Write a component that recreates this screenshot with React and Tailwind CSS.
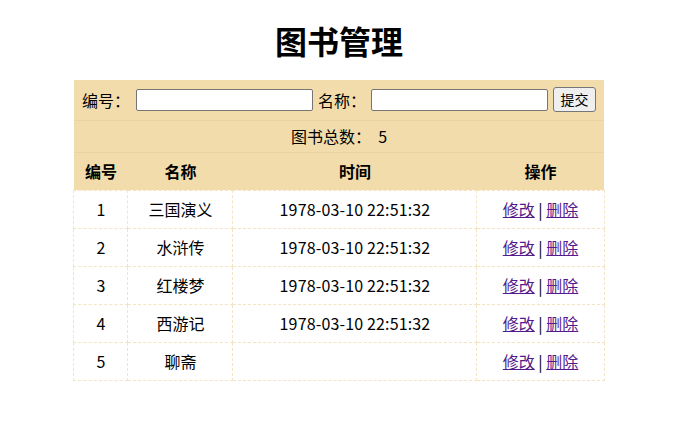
import React from 'react';

const books = [
  { id: 1, name: '三国演义', time: '1978-03-10 22:51:32' },
  { id: 2, name: '水浒传', time: '1978-03-10 22:51:32' },
  { id: 3, name: '红楼梦', time: '1978-03-10 22:51:32' },
  { id: 4, name: '西游记', time: '1978-03-10 22:51:32' },
  { id: 5, name: '聊斋', time: '' },
];

function App() {
  const font = { fontFamily: '"Noto Sans CJK SC", "Microsoft YaHei", sans-serif' };

  return (
    <div className="w-[678px] bg-white text-black text-[16px]" style={font}>
      <div className="h-[80px] flex items-center justify-center">
        <h1 className="text-[32px] font-bold leading-none">图书管理</h1>
      </div>

      <table className="mx-auto w-[530px] table-fixed border-collapse">
        <colgroup>
          <col className="w-[54px]" />
          <col className="w-[105px]" />
          <col className="w-[244px]" />
          <col className="w-[127px]" />
        </colgroup>
        <thead className="bg-[#f3dcab]">
          <tr className="h-[40px] border-b border-[#e8d3a3]">
            <td colSpan={4} className="p-0">
              <div className="flex items-center pl-[8px]">
                <span>编号：</span>
                <input className="ml-[6px] w-[177px] h-[22px] bg-white border border-[#767676] rounded-[2px] text-[13px] px-1" />
                <span className="ml-[5px]">名称：</span>
                <input className="ml-[5px] w-[177px] h-[22px] bg-white border border-[#767676] rounded-[2px] text-[13px] px-1" />
                <button className="ml-[5px] w-[43px] h-[25px] bg-[#efefef] border border-[#767676] rounded-[3px] text-[14px]">提交</button>
              </div>
            </td>
          </tr>
          <tr className="h-[32px] border-b border-[#e8d3a3]">
            <td colSpan={4} className="text-center p-0">图书总数：&nbsp;&nbsp;5</td>
          </tr>
          <tr className="h-[38px]">
            <th className="font-bold p-0">编号</th>
            <th className="font-bold p-0">名称</th>
            <th className="font-bold p-0">时间</th>
            <th className="font-bold p-0">操作</th>
          </tr>
        </thead>
        <tbody>
          {books.map((b) => (
            <tr key={b.id} className="h-[38px]">
              <td className="text-center p-0 border border-dashed border-[#f4e4c3]">{b.id}</td>
              <td className="text-center p-0 border border-dashed border-[#f4e4c3]">{b.name}</td>
              <td className="text-center p-0 border border-dashed border-[#f4e4c3] tracking-[0.15px]">{b.time}</td>
              <td className="text-center p-0 border border-dashed border-[#f4e4c3]">
                <a href="#" className="text-[#551a8b] underline">修改</a> | <a href="#" className="text-[#551a8b] underline">删除</a>
              </td>
            </tr>
          ))}
        </tbody>
      </table>
    </div>
  );
}

export default App;
